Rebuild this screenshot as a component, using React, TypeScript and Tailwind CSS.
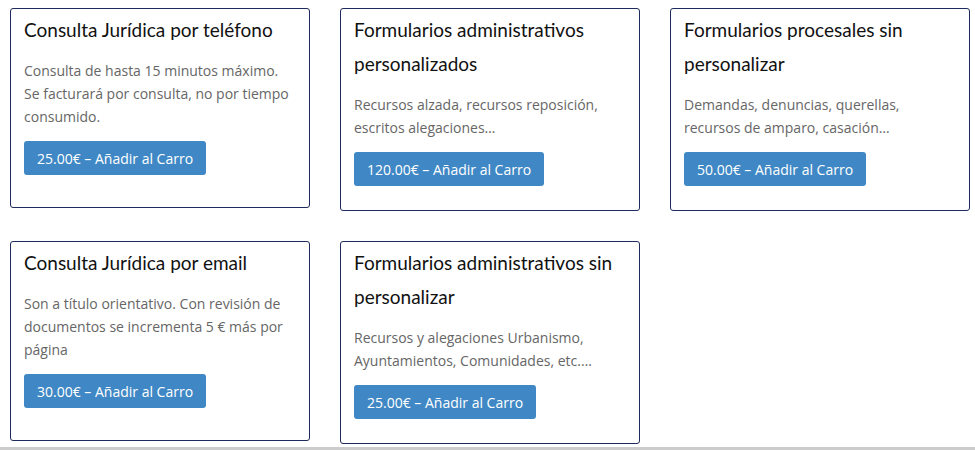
const products = [
  {
    title: 'Consulta Jurídica por teléfono',
    lines: ['Consulta de hasta 15 minutos máximo.', 'Se facturará por consulta, no por tiempo', 'consumido.'],
    price: '25.00€',
  },
  {
    title: 'Formularios administrativos personalizados',
    lines: ['Recursos alzada, recursos reposición,', 'escritos alegaciones…'],
    price: '120.00€',
  },
  {
    title: 'Formularios procesales sin personalizar',
    lines: ['Demandas, denuncias, querellas,', 'recursos de amparo, casación…'],
    price: '50.00€',
  },
  {
    title: 'Consulta Jurídica por email',
    lines: ['Son a título orientativo. Con revisión de', 'documentos se incrementa 5 € más por', 'página'],
    price: '30.00€',
  },
  {
    title: 'Formularios administrativos sin personalizar',
    lines: ['Recursos y alegaciones Urbanismo,', 'Ayuntamientos, Comunidades, etc.…'],
    price: '25.00€',
  },
];

const App = () => {
  return (
    <div className="h-[450px] overflow-hidden bg-white font-['Open_Sans',sans-serif]">
      <div className="grid grid-cols-[300px_300px_300px] items-start gap-[30px] pl-[10px] pt-[8px]">
        {products.map((p) => (
          <div
            key={p.title}
            className="flex min-h-[200px] flex-col items-start rounded-[3px] border border-[#1f2a5e] px-[13px] pb-[24px] pt-[4px]"
          >
            <h3 className="font-['Lato',sans-serif] text-[19px] leading-[34px] text-[#111]">{p.title}</h3>
            <p className="mt-[12px] whitespace-nowrap text-[14px] leading-[23px] text-[#666]">
              {p.lines.map((l, i) => (
                <span key={i} className="block">
                  {l}
                </span>
              ))}
            </p>
            <button className="mt-[13px] h-[34px] rounded-[3px] bg-[#3f88c5] px-[13px] text-[14px] text-white">
              {p.price} – Añadir al Carro
            </button>
          </div>
        ))}
      </div>
      <div className="mt-[3px] h-[10px] bg-[#cccccc]" />
    </div>
  );
};

export default App;
